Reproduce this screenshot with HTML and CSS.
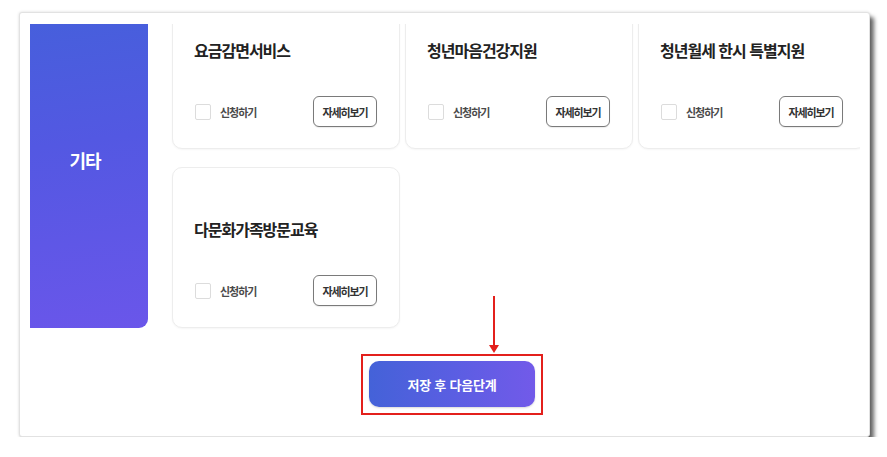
FILE: index.html
```html
<!DOCTYPE html>
<html lang="ko">
<head>
<meta charset="utf-8">
<title>서비스 선택</title>
<link rel="stylesheet" href="styles.css">
</head>
<body>
<div class="page">
  <div class="frame">
    <div class="viewport">
      <div class="content">
        <div class="panel"><span class="panel-label">기타</span></div>
        <div class="grid">
          <div class="card">
            <h3 class="card-title">요금감면서비스</h3>
            <div class="card-row">
              <label class="apply"><span class="check"></span><span class="apply-text">신청하기</span></label>
              <button class="detail">자세히보기</button>
            </div>
          </div>
          <div class="card">
            <h3 class="card-title">청년마음건강지원</h3>
            <div class="card-row">
              <label class="apply"><span class="check"></span><span class="apply-text">신청하기</span></label>
              <button class="detail">자세히보기</button>
            </div>
          </div>
          <div class="card">
            <h3 class="card-title">청년월세 한시 특별지원</h3>
            <div class="card-row">
              <label class="apply"><span class="check"></span><span class="apply-text">신청하기</span></label>
              <button class="detail">자세히보기</button>
            </div>
          </div>
          <div class="card">
            <h3 class="card-title">다문화가족방문교육</h3>
            <div class="card-row">
              <label class="apply"><span class="check"></span><span class="apply-text">신청하기</span></label>
              <button class="detail">자세히보기</button>
            </div>
          </div>
        </div>
      </div>
      <div class="actions">
        <button class="next">저장 후 다음단계</button>
      </div>
    </div>
    <svg class="arrow" width="12" height="58" viewBox="0 0 12 58" aria-hidden="true">
      <line x1="6" y1="0" x2="6" y2="50" stroke="#e3201c" stroke-width="2"/>
      <polygon points="1,49 11,49 6,57" fill="#e3201c"/>
    </svg>
    <div class="highlight"></div>
  </div>
</div>
</body>
</html>
```

FILE: styles.css
```css
* { box-sizing: border-box; }

html, body {
  margin: 0;
  padding: 0;
  background: #ffffff;
  font-family: "Noto Sans CJK KR", "Noto Sans", sans-serif;
}

.page {
  padding: 12px 0 0 19px;
}

.frame {
  position: relative;
  width: 851px;
  height: 425px;
  background: #ffffff;
  border: 1px solid #e2e2e2;
  border-radius: 3px;
  padding: 11px 9px 0 10px;
  box-shadow: 4px 5px 4px rgba(0, 0, 0, 0.6), 0 0 3px rgba(0, 0, 0, 0.15);
}

.viewport {
  height: 412px;
  overflow: hidden;
}

.content {
  display: flex;
  gap: 24px;
  margin-top: -36px;
}

.panel {
  width: 118px;
  flex: none;
  background: linear-gradient(172deg, #4361da 0%, #5358e2 45%, #6a56ea 100%);
  border-radius: 0 0 9px 0;
  display: flex;
  align-items: center;
  justify-content: center;
  padding-top: 4px;
}

.panel-label {
  color: #ffffff;
  font-size: 18px;
  font-weight: 700;
  letter-spacing: -1px;
  margin-right: 8px;
}

.grid {
  display: grid;
  grid-template-columns: repeat(3, 228px);
  column-gap: 5px;
  row-gap: 18px;
  flex: none;
}

.card {
  height: 161px;
  background: #ffffff;
  border: 1px solid #ededed;
  border-radius: 10px;
  box-shadow: 0 1px 2px rgba(0, 0, 0, 0.04);
  padding: 0 22px 21px 21px;
  display: flex;
  flex-direction: column;
  justify-content: flex-end;
}

.card-title {
  margin: 0 0 34px 0;
  font-size: 16px;
  font-weight: 700;
  letter-spacing: -1px;
  color: #222222;
  line-height: 24px;
  white-space: nowrap;
}

.card-row {
  display: flex;
  align-items: center;
  justify-content: space-between;
}

.apply {
  display: flex;
  align-items: center;
  gap: 9px;
  padding-left: 1px;
}

.check {
  width: 16px;
  height: 16px;
  border: 1px solid #dcdcdc;
  border-radius: 2px;
  background: #ffffff;
}

.apply-text {
  font-size: 11px;
  font-weight: 600;
  letter-spacing: -1px;
  color: #4a4a4a;
}

.detail {
  width: 64px;
  height: 31px;
  padding: 0;
  background: #ffffff;
  border: 1px solid #7a7a7a;
  border-radius: 6px;
  font-family: inherit;
  font-size: 11px;
  font-weight: 700;
  letter-spacing: -1.1px;
  color: #333333;
  box-shadow: 0 1px 1px rgba(0, 0, 0, 0.08);
}

.actions {
  margin-top: 33px;
  padding-left: 339px;
}

.next {
  width: 166px;
  height: 46px;
  border: none;
  border-radius: 10px;
  background: linear-gradient(90deg, #4462d8 0%, #5a5ee2 50%, #725ae9 100%);
  color: #ffffff;
  font-family: inherit;
  font-size: 13px;
  font-weight: 700;
  letter-spacing: -0.2px;
  box-shadow: 0 1px 2px rgba(0, 0, 0, 0.15);
}

.highlight {
  position: absolute;
  left: 341px;
  top: 341px;
  width: 182px;
  height: 61px;
  border: 2px solid #e3201c;
}

.arrow {
  position: absolute;
  left: 468px;
  top: 283px;
}
```
